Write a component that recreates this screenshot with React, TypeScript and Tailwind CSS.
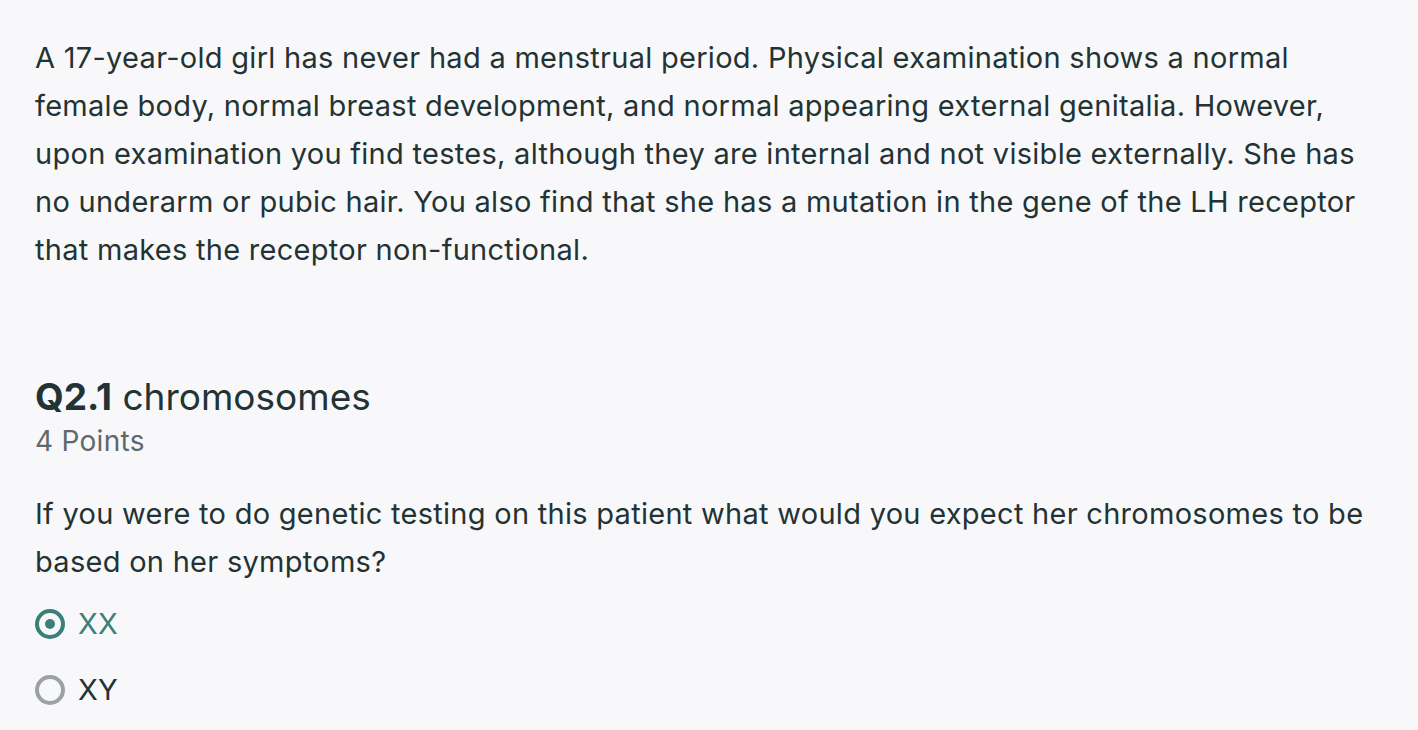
export default function App() {
  return (
    <div className="min-h-[730px] bg-[#f8f8fa] px-[35px] pt-[34px] text-[#233334] font-['Inter',sans-serif] tracking-[0.28px]">
      <p className="text-[29px] leading-[48px] whitespace-nowrap">
        A 17-year-old girl has never had a menstrual period. Physical examination shows a normal
        <br />
        female body, normal breast development, and normal appearing external genitalia. However,
        <br />
        upon examination you find testes, although they are internal and not visible externally. She has
        <br />
        no underarm or pubic hair. You also find that she has a mutation in the gene of the LH receptor
        <br />
        that makes the receptor non-functional.
      </p>
      <div className="mt-[101px]">
        <h2 className="text-[37px] leading-[44px] tracking-[0px]">
          <span className="font-bold">Q2.1</span> chromosomes
        </h2>
        <div className="text-[28px] leading-[44px] text-[#5d696b]">4 Points</div>
      </div>
      <p className="mt-[27px] text-[29px] leading-[48px] whitespace-nowrap">
        If you were to do genetic testing on this patient what would you expect her chromosomes to be
        <br />
        based on her symptoms?
      </p>
      <div className="mt-4 flex flex-col gap-[22px]">
        <label className="flex h-[44px] items-center gap-[13px]">
          <span className="flex h-[30px] w-[30px] items-center justify-center rounded-full border-[4px] border-[#3a7f79]">
            <span className="h-[10px] w-[10px] rounded-full bg-[#3a7f79]" />
          </span>
          <span className="text-[29px] text-[#3a7f79]">XX</span>
        </label>
        <label className="flex h-[44px] items-center gap-[13px]">
          <span className="h-[30px] w-[30px] rounded-full border-[4px] border-[#9ca2a2]" />
          <span className="text-[29px]">XY</span>
        </label>
      </div>
    </div>
  );
}
